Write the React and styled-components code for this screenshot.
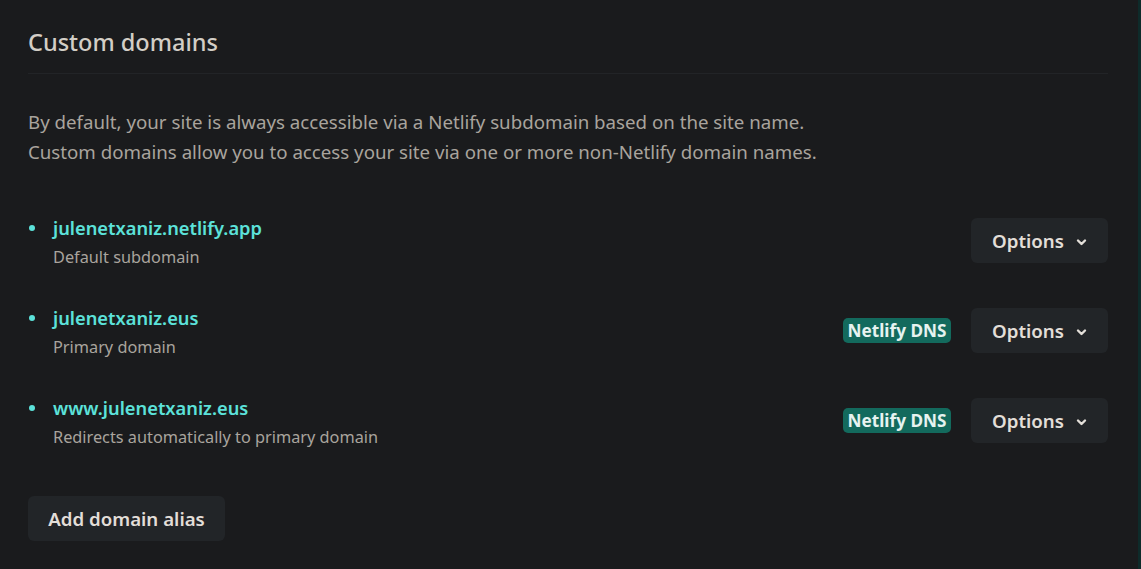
import React from 'react';
import styled, { createGlobalStyle } from 'styled-components';

const GlobalStyle = createGlobalStyle`
  html, body {
    margin: 0;
    padding: 0;
    background: #1a1b1d;
  }
  body {
    font-family: 'Noto Sans', 'Open Sans', sans-serif;
    color: #d0cbc3;
  }
`;

const domains = [
  { name: 'julenetxaniz.netlify.app', note: 'Default subdomain', dns: false },
  { name: 'julenetxaniz.eus', note: 'Primary domain', dns: true },
  { name: 'www.julenetxaniz.eus', note: 'Redirects automatically to primary domain', dns: true },
];

function Chevron() {
  return (
    <svg width="11" height="10" viewBox="0 0 11 10" aria-hidden="true">
      <path d="M2 3.5 L5.5 7 L9 3.5" fill="none" stroke="currentColor" strokeWidth="2.4" strokeLinecap="round" strokeLinejoin="round" />
    </svg>
  );
}

export default function App() {
  return (
    <Page>
      <GlobalStyle />
      <Card>
        <Header>
          <h2>Custom domains</h2>
        </Header>
        <Intro>
          By default, your site is always accessible via a Netlify subdomain based on the site name.
          <br />
          Custom domains allow you to access your site via one or more non-Netlify domain names.
        </Intro>
        <DomainList>
          {domains.map((d) => (
            <DomainRow key={d.name}>
              <div className="info">
                <a className="name" href="#">{d.name}</a>
                <span className="note">{d.note}</span>
              </div>
              <div className="actions">
                {d.dns && <Badge>Netlify DNS</Badge>}
                <Button>
                  Options <Chevron />
                </Button>
              </div>
            </DomainRow>
          ))}
        </DomainList>
        <Button $wide>Add domain alias</Button>
      </Card>
    </Page>
  );
}

const Page = styled.div`
  width: 1141px;
  height: 569px;
  box-sizing: border-box;
  border-right: 3px solid #0e2b2a;
  overflow: hidden;
`;

const Card = styled.section`
  padding: 0 30px 0 28px;
  display: flex;
  flex-direction: column;
  align-items: flex-start;
`;

const Header = styled.div`
  align-self: stretch;
  border-bottom: 1px solid #222427;
  padding: 25px 0 14px;
  h2 {
    margin: 0;
    font-size: 23.5px;
    font-weight: 500;
    line-height: 34px;
    color: #d3cec6;
  }
`;

const Intro = styled.p`
  margin: 33px 0 51px;
  font-size: 18.7px;
  line-height: 30px;
  color: #a9a49d;
`;

const DomainList = styled.ul`
  align-self: stretch;
  list-style: none;
  margin: 0 0 53px;
  padding: 0;
  display: flex;
  flex-direction: column;
  gap: 45px;
`;

const DomainRow = styled.li`
  display: flex;
  justify-content: space-between;
  align-items: flex-start;
  height: 45px;
  .info {
    position: relative;
    display: flex;
    flex-direction: column;
    padding-left: 25px;
    &::before {
      content: '';
      position: absolute;
      left: 1px;
      top: 7px;
      width: 6px;
      height: 6px;
      border-radius: 50%;
      background: #5ce2da;
    }
  }
  .name {
    font-size: 18.3px;
    font-weight: 600;
    line-height: 20px;
    color: #5ce2da;
    text-decoration: none;
  }
  .note {
    margin-top: 9px;
    font-size: 16.3px;
    line-height: 20px;
    color: #a9a49d;
  }
  .actions {
    display: flex;
    align-items: center;
    gap: 20px;
  }
`;

const Badge = styled.span`
  display: inline-flex;
  align-items: center;
  justify-content: center;
  height: 25px;
  width: 108px;
  border-radius: 5px;
  background: #136a5d;
  color: #e6f3f0;
  font-size: 17.2px;
  font-weight: 700;
`;

const Button = styled.button`
  display: inline-flex;
  align-items: center;
  justify-content: center;
  gap: 12px;
  height: 45px;
  width: ${(p) => (p.$wide ? '197px' : '137px')};
  padding: 0;
  border: none;
  border-radius: 6px;
  background: #222528;
  color: #e2ded8;
  font-family: inherit;
  font-size: 18.7px;
  font-weight: 600;
  cursor: pointer;
  svg {
    margin-top: 2px;
  }
`;
